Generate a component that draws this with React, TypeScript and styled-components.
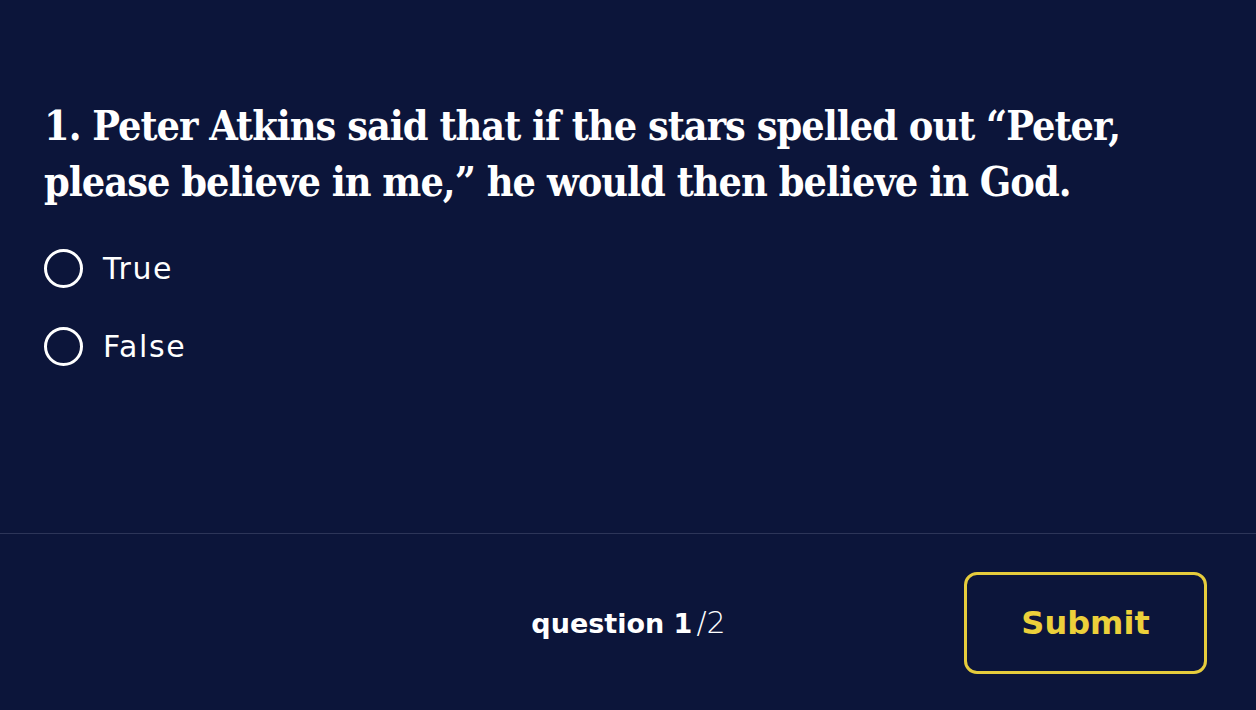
import React from "react";
import styled, { createGlobalStyle } from "styled-components";

const Global = createGlobalStyle`
  html, body { margin: 0; padding: 0; background: #0c153a; }
  body { font-family: "DejaVu Sans", sans-serif; color: #ffffff; }
  * { box-sizing: border-box; }
`;

const Page = styled.div`
  width: 1256px;
  height: 710px;
  background: #0c153a;
  display: flex;
  flex-direction: column;
`;

const Main = styled.main`
  flex: 1;
  padding: 98px 44px 0 44px;
`;

const Question = styled.h1`
  margin: 0 0 38px 0;
  font-family: "DejaVu Serif Condensed", "Liberation Serif", serif;
  font-weight: 700;
  font-size: 41px;
  line-height: 56px;
  letter-spacing: -1px;
  color: #ffffff;
  max-width: 1120px;
`;

const Options = styled.div`
  display: flex;
  flex-direction: column;
  gap: 38px;
`;

const Option = styled.label`
  display: flex;
  align-items: center;
  gap: 20px;
  height: 40px;
  font-family: "DejaVu Sans", sans-serif;
  font-size: 30px;
  letter-spacing: 1.6px;
  font-weight: 400;
  color: #ffffff;
  cursor: pointer;
`;

const Radio = styled.span`
  width: 39px;
  height: 39px;
  border-radius: 50%;
  border: 3px solid #ffffff;
  flex: none;
`;

const Footer = styled.footer`
  height: 177px;
  border-top: 1px solid #2d3558;
  display: grid;
  grid-template-columns: 1fr auto 1fr;
  align-items: center;
  padding: 0 49px 0 44px;
`;

const Counter = styled.div`
  grid-column: 2;
  display: flex;
  align-items: baseline;
  gap: 4px;
  font-family: "DejaVu Sans", sans-serif;
  font-size: 27px;
  color: #ffffff;
  padding-left: 6px;
`;

const Strong = styled.span`
  font-weight: 700;
`;

const Light = styled.span`
  font-weight: 300;
  font-size: 30px;
`;

const SubmitButton = styled.button`
  grid-column: 3;
  justify-self: end;
  width: 243px;
  height: 102px;
  border: 3px solid #e6cc3c;
  border-radius: 13px;
  background: transparent;
  color: #ecd03a;
  font-family: "DejaVu Sans", sans-serif;
  font-weight: 700;
  font-size: 32px;
  cursor: pointer;
  margin-top: 1px;
`;

export default function App() {
  return (
    <>
      <Global />
      <Page>
        <Main>
          <Question>
            1. Peter Atkins said that if the stars spelled out “Peter, please believe in me,” he would then believe in God.
          </Question>
          <Options>
            <Option>
              <Radio />
              True
            </Option>
            <Option>
              <Radio />
              False
            </Option>
          </Options>
        </Main>
        <Footer>
          <Counter>
            <Strong>question 1</Strong>
            <Light>/2</Light>
          </Counter>
          <SubmitButton>Submit</SubmitButton>
        </Footer>
      </Page>
    </>
  );
}
